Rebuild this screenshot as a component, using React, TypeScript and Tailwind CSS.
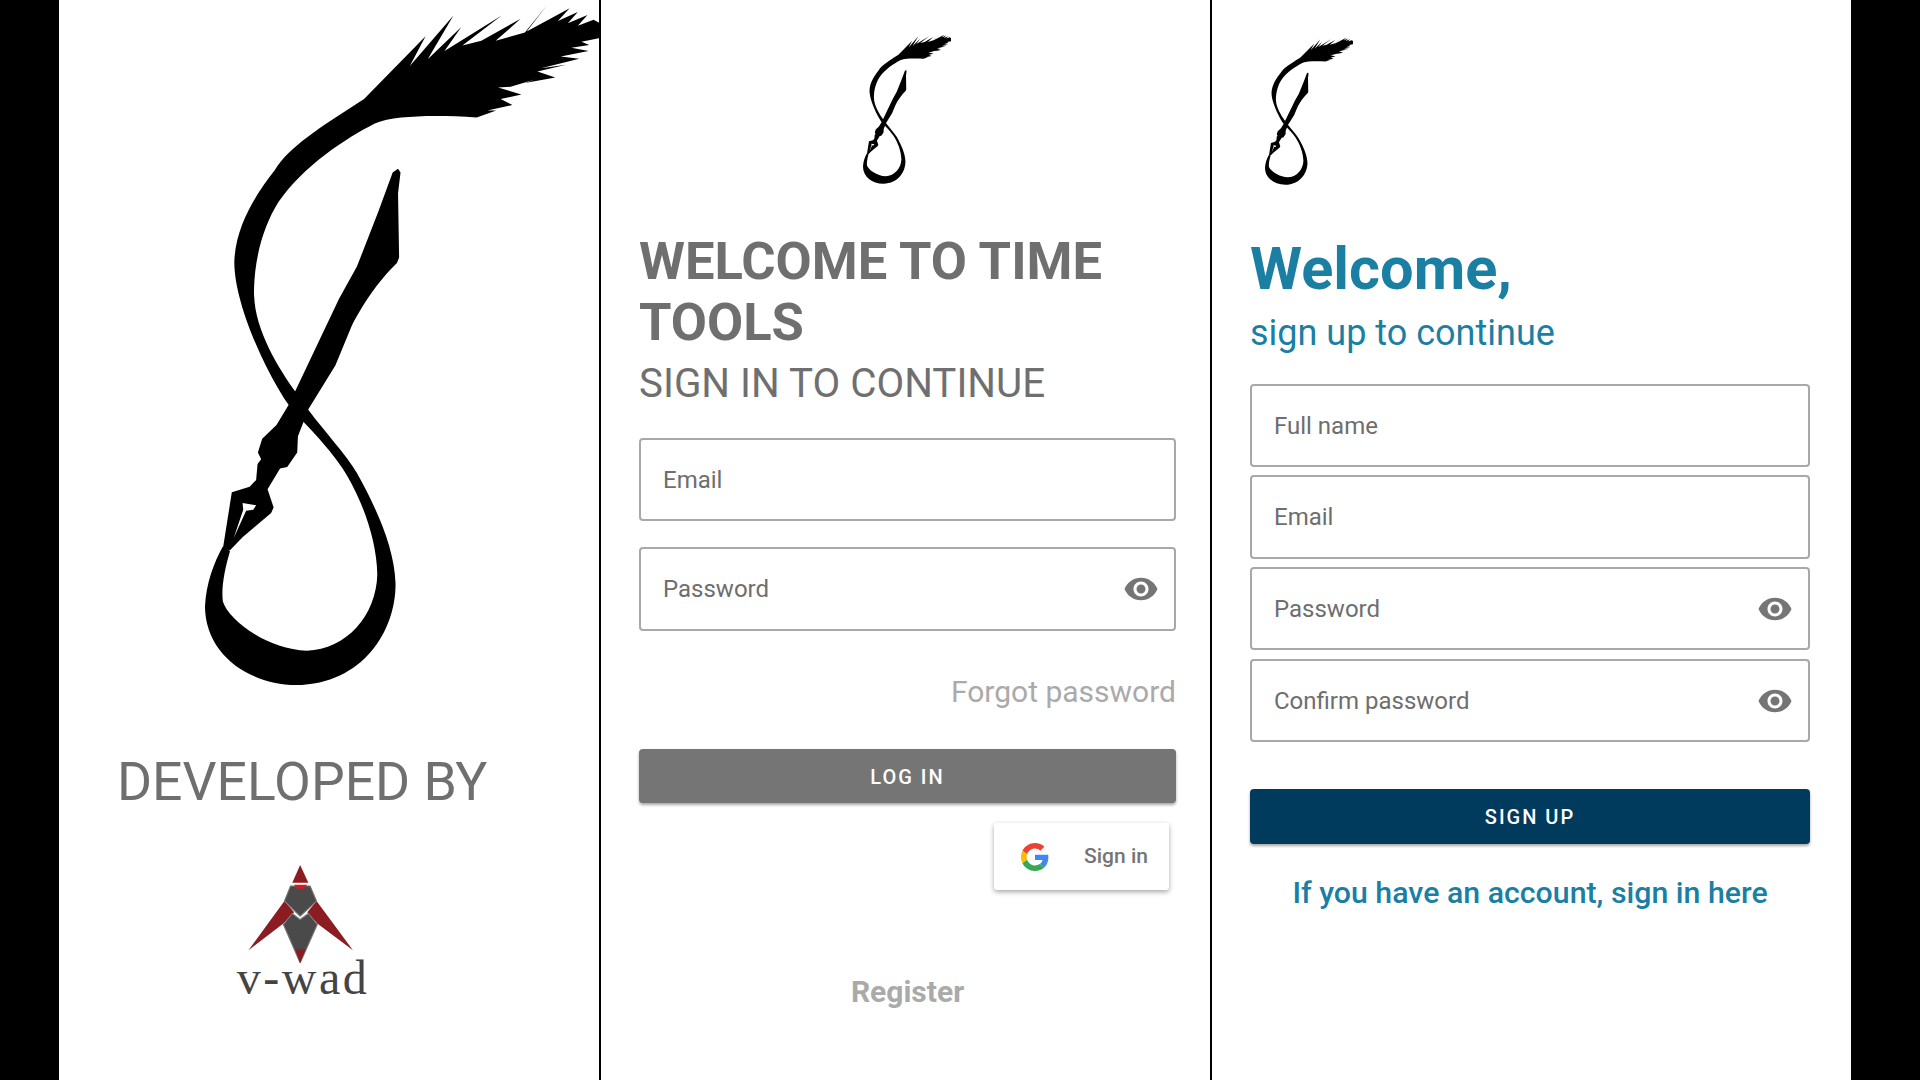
import React from 'react';

const EYE =
  'M12 4.5C7 4.5 2.73 7.61 1 12c1.73 4.39 6 7.5 11 7.5s9.27-3.11 11-7.5c-1.73-4.39-6-7.5-11-7.5zM12 17c-2.76 0-5-2.24-5-5s2.24-5 5-5 5 2.24 5 5-2.24 5-5 5zm0-8c-1.66 0-3 1.34-3 3s1.34 3 3 3 3-1.34 3-3-1.34-3-3-3z';

// Pen-and-feather figure eight, traced from the splash logo
function PenLogo({ className }: { className: string }) {
  return (
    <svg viewBox="405 10 1105 1484" preserveAspectRatio="none" className={className}>
      {/* feather and upper curve */}
      <path
        fill="#000"
        d="M850 215 L1022 78 L978 143 L1100 33 L1028 128 L1122 58 L1075 110 L1235 33 L1125 98 L1178 88 L1288 40 L1218 88 L1300 70 L1362 10 L1305 68 L1425 17 L1392 45 L1448 25 L1420 50 L1475 32 L1448 55 L1492 42 L1510 50 L1510 82 L1458 90 L1480 97 L1430 103 L1478 110 L1400 122 L1452 127 L1345 148 L1415 140 L1335 155 L1385 168 L1300 180 L1330 172 L1260 188 L1225 190 L1290 205 L1232 215 L1265 228 L1195 240 L1220 240 L1165 255 C1050 250 940 250 880 268 C800 300 680 360 610 440 C570 490 542 560 542 640 C545 720 610 800 660 855 L640 882 C590 830 487 670 487 570 C490 490 550 420 600 370 C640 320 720 280 850 215 Z"
      />
      {/* lower loop */}
      <path
        fill="#000"
        d="M640 880 L695 893 C740 940 800 990 830 1030 C880 1100 935 1190 938 1270 C940 1370 850 1490 660 1492 C520 1490 405 1420 405 1320 C408 1270 430 1225 455 1190 L475 1200 C460 1240 450 1280 455 1310 C470 1350 580 1415 690 1417 C800 1415 885 1340 887 1250 C885 1170 840 1080 790 1020 C760 985 720 950 680 918 Z"
      />
      {/* pen and nib */}
      <path
        fill="#000"
        d="M945 367 L952 375 L945 420 L948 560 L942 572 C890 610 840 670 815 710 L770 795 L695 890 L665 950 L663 985 L635 1017 L615 1020 L580 1065 L597 1105 L590 1117 L510 1170 L475 1198 L455 1195 L480 1072 L530 1060 L548 1045 L552 1010 L562 1000 L553 985 L565 955 L605 925 L640 880 L780 650 L830 580 L890 460 L930 375 Z"
      />
      <path fill="#fff" d="M510 1095 L548 1100 L540 1110 L520 1112 L485 1172 L512 1110 Z" />
    </svg>
  );
}

function VwadLogo() {
  return (
    <div className="flex flex-col items-center">
      <svg viewBox="495 437 370 293" preserveAspectRatio="none" className="h-[98px] w-[132px]">
        <path fill="#8a1c22" d="M628 545 L527 692 L625 612 L655 578 Z" />
        <path fill="#8a1c22" d="M718 545 L820 692 L720 612 L692 578 Z" />
        <path fill="#4a4a4a" stroke="#777" strokeWidth="3" d="M645 500 L700 500 L718 545 L672 590 L628 545 Z" />
        <path fill="#4a4a4a" stroke="#777" strokeWidth="3" d="M672 600 L650 582 L625 615 L672 730 L720 615 L695 582 Z" />
        <path fill="#8a1c22" d="M672 437 L650 490 L695 490 Z" />
        <path fill="#d81a1f" d="M655 496 L692 496 L682 508 L664 508 Z" />
        <path fill="#8a1c22" d="M658 690 L687 690 L672 730 Z" />
      </svg>
      <span className="-mt-[7px] whitespace-nowrap font-['Liberation_Serif',serif] text-[48px] leading-[44px] tracking-[2.5px] text-[#444]">
        v-wad
      </span>
    </div>
  );
}

function GoogleMark() {
  return (
    <svg viewBox="0 0 48 48" className="h-[28px] w-[28px]">
      <path fill="#EA4335" d="M24 9.5c3.54 0 6.71 1.22 9.21 3.6l6.85-6.85C35.9 2.38 30.47 0 24 0 14.62 0 6.51 5.38 2.56 13.22l7.98 6.19C12.43 13.72 17.74 9.5 24 9.5z" />
      <path fill="#4285F4" d="M46.98 24.55c0-1.57-.15-3.09-.38-4.55H24v9.02h12.94c-.58 2.96-2.26 5.48-4.78 7.18l7.73 6c4.51-4.18 7.09-10.36 7.09-17.65z" />
      <path fill="#FBBC05" d="M10.53 28.59c-.48-1.45-.76-2.99-.76-4.59s.27-3.14.76-4.59l-7.98-6.19C.92 16.46 0 20.12 0 24c0 3.88.92 7.54 2.56 10.78l7.97-6.19z" />
      <path fill="#34A853" d="M24 48c6.48 0 11.93-2.13 15.89-5.81l-7.73-6c-2.15 1.45-4.92 2.3-8.16 2.3-6.26 0-11.57-4.22-13.47-9.91l-7.98 6.19C6.51 42.62 14.62 48 24 48z" />
    </svg>
  );
}

function Field({ label, eye, className }: { label: string; eye?: boolean; className: string }) {
  return (
    <div className={`flex items-center justify-between rounded-[4px] border-2 border-[#a8a8a8] pl-[22px] pr-[15px] ${className}`}>
      <span className="text-[24px] text-[#6e6e6e]">{label}</span>
      {eye && (
        <svg viewBox="0 0 24 24" className="h-[36px] w-[36px]" fill="#757575">
          <path d={EYE} />
        </svg>
      )}
    </div>
  );
}

export default function App() {
  return (
    <div className="flex h-screen w-full overflow-hidden bg-black pl-[59px] font-['Roboto',sans-serif]">
      {/* Splash */}
      <div className="flex w-[540px] flex-col bg-white pt-[5px]">
        <PenLogo className="ml-[146px] h-[681px] w-[395px] shrink-0" />
        <h2 className="ml-[58px] mt-[66px] text-[53.5px] font-normal leading-[60px] text-[#6f6f6f]">DEVELOPED BY</h2>
        <div className="ml-[178px] mt-[53px] w-[132px]">
          <VwadLogo />
        </div>
      </div>

      {/* Sign in */}
      <div className="ml-[2px] flex w-[609px] flex-col bg-white pl-[38px] pr-[34px] pt-[34px]">
        <PenLogo className="ml-[224px] h-[150px] w-[88px] shrink-0" />
        <h1 className="mt-[47px] text-[52.5px] font-bold leading-[61px] text-[#6f6f6f]">WELCOME TO TIME TOOLS</h1>
        <p className="text-[40.3px] leading-[61px] text-[#6f6f6f]">SIGN IN TO CONTINUE</p>
        <Field label="Email" className="mt-[24px] h-[83px]" />
        <Field label="Password" eye className="mt-[26px] h-[84px]" />
        <a className="mt-[43px] self-end text-[30px] leading-[36px] text-[#aaaaaa]">Forgot password</a>
        <button className="mt-[39px] h-[54px] rounded-[4px] bg-[#757575] pt-[1px] text-[20px] font-medium tracking-[2px] text-white shadow-[0_2px_3px_rgba(0,0,0,0.35)]">
          LOG IN
        </button>
        <button className="mr-[7px] mt-[20px] flex h-[67px] w-[175px] items-center gap-[35px] self-end rounded-[3px] bg-white pl-[27px] shadow-[0_2px_5px_rgba(0,0,0,0.35)]">
          <GoogleMark />
          <span className="text-[21px] font-medium text-[#757575]">Sign in</span>
        </button>
        <a className="mt-[84px] self-center text-[30px] font-bold leading-[36px] text-[#aaaaaa]">Register</a>
      </div>

      {/* Sign up */}
      <div className="ml-[2px] flex w-[639px] flex-col bg-white pl-[38px] pr-[41px] pt-[37px]">
        <PenLogo className="ml-[15px] h-[148px] w-[88px] shrink-0" />
        <h1 className="mt-[50px] text-[59.5px] font-bold leading-[68px] text-[#1a7fa3]">Welcome,</h1>
        <p className="mt-[8px] text-[36px] leading-[44px] text-[#1a7fa3]">sign up to continue</p>
        <Field label="Full name" className="mt-[29px] h-[83px]" />
        <Field label="Email" className="mt-[8px] h-[84px]" />
        <Field label="Password" eye className="mt-[8px] h-[83px]" />
        <Field label="Confirm password" eye className="mt-[9px] h-[83px]" />
        <button className="mt-[47px] h-[55px] rounded-[4px] bg-[#003a5d] pt-[1px] text-[20px] font-medium tracking-[2px] text-white shadow-[0_2px_3px_rgba(0,0,0,0.35)]">
          SIGN UP
        </button>
        <a className="mt-[31px] self-center text-[30.3px] font-medium leading-[36px] text-[#1a7fa3]">
          If you have an account, sign in here
        </a>
      </div>
    </div>
  );
}
